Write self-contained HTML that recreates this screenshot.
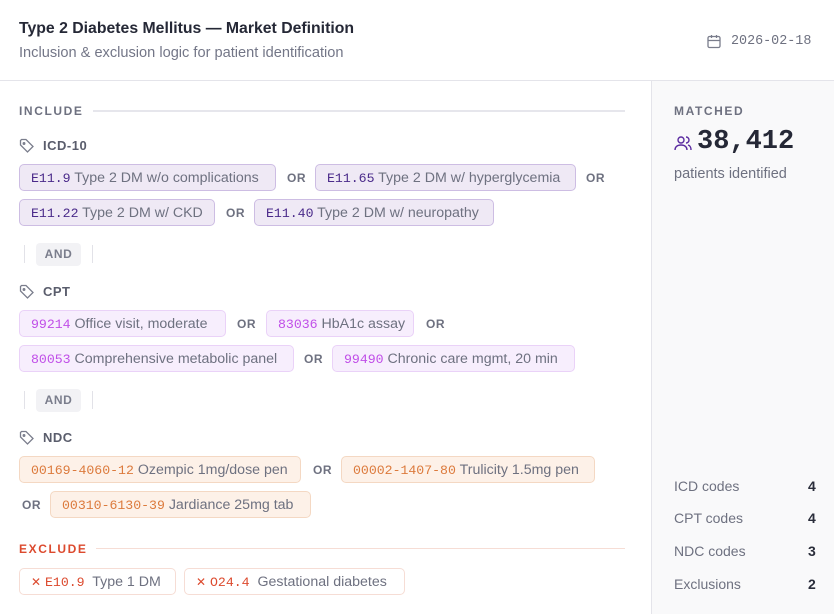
<!DOCTYPE html>
<html><head><meta charset="utf-8"><style>
*{margin:0;padding:0;box-sizing:border-box}
body{width:834px;height:614px;background:#fff;font-family:"Liberation Sans",sans-serif;position:relative;overflow:hidden;color:#2a2d3a}
.a{position:absolute;white-space:nowrap}
.mono{font-family:"Liberation Mono",monospace;font-size:13.2px}
.chip{position:absolute;height:27px;border-radius:5px;border:1px solid;font-size:14.2px;line-height:27px;padding-left:11px;white-space:nowrap;color:#6e7180;overflow:hidden}
.icd{background:#efe9f5;border-color:#cdbde3}
.icd b{color:#4a2a8a;font-weight:normal}
.cpt{background:#f7eefd;border-color:#ead2f8}
.cpt b{color:#c04ee8;font-weight:normal}
.ndc{background:#fdf1e8;border-color:#f4d8c3}
.ndc b{color:#dc7a3c;font-weight:normal}
.exc{background:#fff;border-color:#f6ddd5}
.exc b{color:#dc4a2e;font-weight:normal}
.or{position:absolute;font-size:12px;font-weight:bold;color:#6e7180;letter-spacing:.5px}
.lbl{position:absolute;font-size:13px;font-weight:bold;color:#5a5d6c;letter-spacing:.5px}
.sec{position:absolute;font-size:12px;font-weight:bold;letter-spacing:1.6px}
.and{position:absolute;left:36px;width:45px;height:23px;background:#f2f2f5;border-radius:4px;font-size:12px;font-weight:bold;color:#7a7d8c;text-align:center;line-height:23px;letter-spacing:.6px}
.vl{position:absolute;width:1px;height:18px;background:#e2e2e8}
.st{position:absolute;left:674px;font-size:14px;color:#6e7180}
.sn{position:absolute;left:808px;font-size:14px;font-weight:bold;color:#2a2d3a}
</style></head><body>
<div class="a" style="left:19px;top:20px;font-size:15.8px;font-weight:bold;color:#252836">Type 2 Diabetes Mellitus — Market Definition</div>
<div class="a" style="left:19px;top:45px;font-size:14.6px;color:#737687">Inclusion &amp; exclusion logic for patient identification</div>
<svg class="a" style="left:707px;top:34px" width="14" height="15" viewBox="0 0 14 15" fill="none" stroke="#7a7d8c" stroke-width="1.3"><rect x="1" y="2.5" width="12" height="11" rx="1.5"/><path d="M1 6.5h12M4.5 1v3M9.5 1v3"/></svg>
<div class="a mono" style="left:731px;top:34px;font-size:13.4px;color:#6e7180">2026-02-18</div>
<div class="a" style="left:0;top:80px;width:834px;height:1px;background:#e4e4ea"></div>
<div class="a" style="left:651px;top:81px;width:183px;height:533px;background:#f9f9fa;border-left:1px solid #e4e4ea"></div>

<div class="sec" style="left:19px;top:104px;color:#6e7180">INCLUDE</div>
<div class="a" style="left:93px;top:110px;width:532px;height:2px;background:#e6e6ec"></div>

<svg class="a" style="left:19px;top:138px" width="16" height="16" viewBox="0 0 16 16" fill="none" stroke="#7a7d8c" stroke-width="1.3"><path d="M1.5 2.5v4.5l7 7 5.5-5.5-7-7H2.5z"/><circle cx="5" cy="5.5" r="0.8"/></svg>
<div class="lbl" style="left:43px;top:138px">ICD-10</div>
<div class="chip icd" style="left:19px;top:164px;width:257px"><b class="mono">E11.9</b> Type 2 DM w/o complications</div>
<div class="or" style="left:287px;top:171px">OR</div>
<div class="chip icd" style="left:315px;top:164px;width:261px"><b class="mono">E11.65</b> Type 2 DM w/ hyperglycemia</div>
<div class="or" style="left:586px;top:171px">OR</div>
<div class="chip icd" style="left:19px;top:199px;width:196px"><b class="mono">E11.22</b> Type 2 DM w/ CKD</div>
<div class="or" style="left:226px;top:206px">OR</div>
<div class="chip icd" style="left:254px;top:199px;width:240px"><b class="mono">E11.40</b> Type 2 DM w/ neuropathy</div>
<div class="vl" style="left:24px;top:245px"></div><div class="and" style="top:243px">AND</div><div class="vl" style="left:92px;top:245px"></div>

<svg class="a" style="left:19px;top:284px" width="16" height="16" viewBox="0 0 16 16" fill="none" stroke="#7a7d8c" stroke-width="1.3"><path d="M1.5 2.5v4.5l7 7 5.5-5.5-7-7H2.5z"/><circle cx="5" cy="5.5" r="0.8"/></svg>
<div class="lbl" style="left:43px;top:284px">CPT</div>
<div class="chip cpt" style="left:19px;top:310px;width:207px"><b class="mono">99214</b> Office visit, moderate</div>
<div class="or" style="left:237px;top:317px">OR</div>
<div class="chip cpt" style="left:266px;top:310px;width:148px"><b class="mono">83036</b> HbA1c assay</div>
<div class="or" style="left:426px;top:317px">OR</div>
<div class="chip cpt" style="left:19px;top:345px;width:275px"><b class="mono">80053</b> Comprehensive metabolic panel</div>
<div class="or" style="left:304px;top:352px">OR</div>
<div class="chip cpt" style="left:332px;top:345px;width:243px"><b class="mono">99490</b> Chronic care mgmt, 20 min</div>
<div class="vl" style="left:24px;top:391px"></div><div class="and" style="top:389px">AND</div><div class="vl" style="left:92px;top:391px"></div>

<svg class="a" style="left:19px;top:430px" width="16" height="16" viewBox="0 0 16 16" fill="none" stroke="#7a7d8c" stroke-width="1.3"><path d="M1.5 2.5v4.5l7 7 5.5-5.5-7-7H2.5z"/><circle cx="5" cy="5.5" r="0.8"/></svg>
<div class="lbl" style="left:43px;top:430px">NDC</div>
<div class="chip ndc" style="left:19px;top:456px;width:282px"><b class="mono">00169-4060-12</b> Ozempic 1mg/dose pen</div>
<div class="or" style="left:313px;top:463px">OR</div>
<div class="chip ndc" style="left:341px;top:456px;width:254px"><b class="mono">00002-1407-80</b> Trulicity 1.5mg pen</div>
<div class="or" style="left:22px;top:498px">OR</div>
<div class="chip ndc" style="left:50px;top:491px;width:261px"><b class="mono">00310-6130-39</b> Jardiance 25mg tab</div>

<div class="sec" style="left:19px;top:542px;color:#dc4a2e">EXCLUDE</div>
<div class="a" style="left:96px;top:548px;width:529px;height:1px;background:#f6ddd5"></div>
<div class="chip exc" style="left:19px;top:568px;width:157px"><b><span style="font-size:12px">✕</span> <span class="mono">E10.9</span></b>&nbsp; Type 1 DM</div>
<div class="chip exc" style="left:184px;top:568px;width:221px"><b><span style="font-size:12px">✕</span> <span class="mono">O24.4</span></b>&nbsp; Gestational diabetes</div>

<div class="sec" style="left:674px;top:104px;color:#6e7180;font-size:12px">MATCHED</div>
<svg class="a" style="left:674px;top:135px" width="18" height="17" viewBox="0 0 18 17" fill="none" stroke="#5a2aa0" stroke-width="1.4"><circle cx="7" cy="5" r="3"/><path d="M1 15c0-3.5 2.7-5 6-5s6 1.5 6 5M12 2a3 3 0 010 6M14 10c2 .5 3 2 3 5"/></svg>
<div class="a mono" style="left:697px;top:127px;font-size:27px;font-weight:bold;color:#252836">38,412</div>
<div class="a" style="left:674px;top:166px;font-size:14.5px;color:#6e7180">patients identified</div>

<div class="st" style="top:478px">ICD codes</div><div class="sn" style="top:478px">4</div>
<div class="st" style="top:510px">CPT codes</div><div class="sn" style="top:510px">4</div>
<div class="st" style="top:543px">NDC codes</div><div class="sn" style="top:543px">3</div>
<div class="st" style="top:576px">Exclusions</div><div class="sn" style="top:576px">2</div>
</body></html>
